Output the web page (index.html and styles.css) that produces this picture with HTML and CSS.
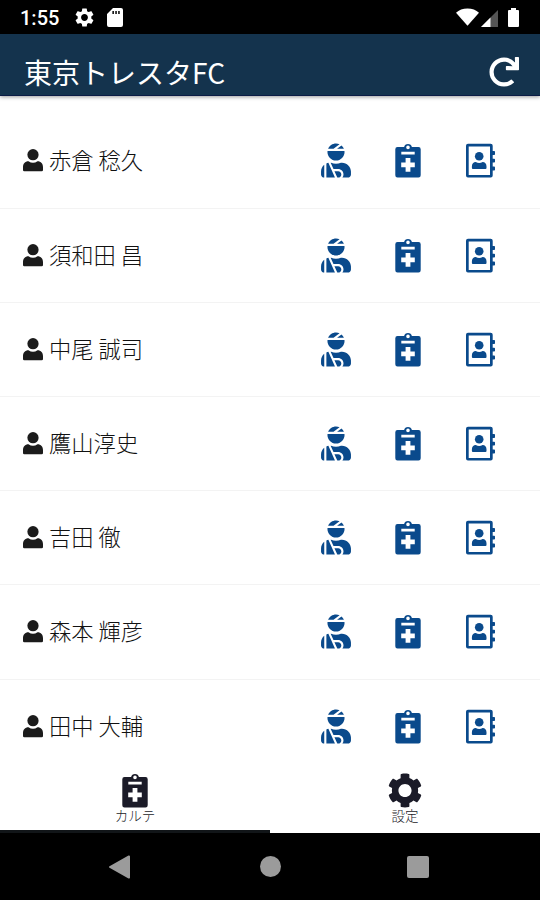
FILE: index.html
```
<!DOCTYPE html>
<html lang="ja">
<head>
    <meta charset="UTF-8">
    <meta name="viewport" content="width=device-width, initial-scale=1.0">
    <title>東京トレスタFC</title>
    <link rel="stylesheet" href="styles.css">
</head>
<body>

    <!-- icons used more than once -->
    <svg class="icon-defs" width="0" height="0">
        <symbol id="icon-user" viewBox="0 0 20 23">
            <circle cx="10" cy="5.700" r="5.600"/>
            <path d="M5.500 12.200c1.400 1 2.900 1.500 4.500 1.500s3.100-.5 4.500-1.500c3.500 0 5.500 2.500 5.500 6V21a1.300 1.300 0 0 1-1.300 1.300H1.300A1.300 1.300 0 0 1 0 21v-2.800c0-3.500 2-6 5.500-6z"/>
        </symbol>
        <symbol id="icon-injured" viewBox="-6 -6 460 524">
            <path d="M277.37 11.98C261.08 4.47 243.11 0 224 0c-53.69 0-99.5 33.13-118.51 80h81.19l90.69-68.02zM342.51 80c-7.9-19.47-20.67-36.2-36.49-49.52L239.99 80h102.52zM224 256c70.69 0 128-57.31 128-128 0-5.48-.95-10.7-1.61-16H97.61c-.67 5.3-1.61 10.52-1.61 16 0 70.69 57.31 128 128 128zM80 299.7V512h128.26l-98.45-221.52A132.835 132.835 0 0 0 80 299.7zM0 464c0 26.51 21.49 48 48 48V320.24C18.88 344.89 0 381.26 0 422.4V464zm256-48h-55.38l42.67 96H256c26.47 0 48-21.53 48-48s-21.53-48-48-48zm57.6-128h-16.71c-22.24 10.18-46.88 16-72.89 16s-50.65-5.82-72.89-16h-7.37l42.67 96H256c44.11 0 80 35.89 80 80 0 18.08-6.26 34.59-16.41 48H400c26.51 0 48-21.49 48-48v-41.6c0-74.23-60.17-134.4-134.4-134.4z"/>
        </symbol>
        <symbol id="icon-notes" viewBox="0 0 36 35">
            <path fill-rule="evenodd" d="M7.500 4.100h6.600a4 4 0 0 1 7.800 0h6.600a2.200 2.200 0 0 1 2.200 2.200v25.900a2.200 2.200 0 0 1-2.200 2.200h-21a2.200 2.200 0 0 1-2.200-2.200V6.300a2.200 2.200 0 0 1 2.200-2.200zM18 2.600a1.800 1.800 0 1 0 0 3.600A1.800 1.800 0 1 0 18 2.600zM11.300 8.700v2.800h13.400V8.700zM15.600 15.100v4.400h-4.400v4.800h4.400v4.400h4.800v-4.400h4.400v-4.800h-4.400v-4.400z"/>
        </symbol>
        <symbol id="icon-book" viewBox="0 0 36 35">
            <path fill-rule="evenodd" d="M6 .8h22.700a2 2 0 0 1 2 2V8h1.500a.8.8 0 0 1 .8.8v2.400a.8.8 0 0 1-.8.8h-1.500v3.700h1.500a.8.8 0 0 1 .8.8v2.200a.8.8 0 0 1-.8.8h-1.500v4.100h1.500a.8.8 0 0 1 .8.8v2.400a.8.8 0 0 1-.8.8h-1.500v5a2 2 0 0 1-2 2H6a2 2 0 0 1-2-2V2.800a2 2 0 0 1 2-2zM6.700 3.500V32h21.300V3.500z"/>
            <circle cx="17.200" cy="13.300" r="4.300"/>
            <path d="M13.800 19.100c2 1.200 4.800 1.200 6.800 0 2.400 0 3.900 1.800 3.900 4.200V25a1 1 0 0 1-1 1H10.900a1 1 0 0 1-1-1v-1.700c0-2.400 1.500-4.200 3.900-4.200z"/>
        </symbol>
    </svg>

    <div class="status-bar">
        <span class="clock">1:55</span>
        <svg class="status-gear" viewBox="2 2 20 20"><path d="M19.14 12.94c.04-.3.06-.61.06-.94 0-.32-.02-.64-.07-.94l2.03-1.58a.49.49 0 0 0 .12-.61l-1.92-3.32a.488.488 0 0 0-.59-.22l-2.39.96c-.5-.38-1.03-.7-1.62-.94l-.36-2.54a.484.484 0 0 0-.48-.41h-3.84c-.24 0-.43.17-.47.41l-.36 2.54c-.59.24-1.13.57-1.62.94l-2.39-.96c-.22-.08-.47 0-.59.22L2.74 8.87c-.12.21-.08.47.12.61l2.03 1.58c-.05.3-.09.63-.09.94s.02.64.07.94l-2.03 1.58a.49.49 0 0 0-.12.61l1.92 3.32c.12.22.37.29.59.22l2.39-.96c.5.38 1.03.7 1.62.94l.36 2.54c.05.24.24.41.48.41h3.84c.24 0 .44-.17.47-.41l.36-2.54c.59-.24 1.13-.56 1.62-.94l2.39.96c.22.08.47 0 .59-.22l1.92-3.32c.12-.22.07-.47-.12-.61l-2.01-1.58zM12 15.6c-1.98 0-3.6-1.62-3.6-3.6s1.62-3.6 3.6-3.6 3.6 1.62 3.6 3.6-1.62 3.6-3.6 3.6z"/></svg>
        <svg class="status-card" viewBox="0 0 16 19"><path fill-rule="evenodd" d="M6 0h8a2 2 0 0 1 2 2v15a2 2 0 0 1-2 2H2a2 2 0 0 1-2-2V6zM5.400 3v3h1.500V3zM8.300 3v3h1.500V3zM11.200 3v3h1.500V3z"/></svg>
        <svg class="status-wifi" viewBox="0 0 24 18"><path d="M12 18L0 4.500C3 1.600 7.200 0 12 0s9 1.600 12 4.500z"/></svg>
        <svg class="status-signal" viewBox="0 0 17 17"><path class="signal-weak" d="M17 0v17H0z"/><path d="M9.500 7.500V17H0z"/></svg>
        <svg class="status-battery" viewBox="0 0 11 19"><path d="M3 0h5v2h2a1 1 0 0 1 1 1v15a1 1 0 0 1-1 1H1a1 1 0 0 1-1-1V3a1 1 0 0 1 1-1h2z"/></svg>
    </div>

    <header class="header">
        <h1 class="title">東京トレスタFC</h1>
        <svg class="reload" viewBox="0 0 512 512"><path d="M500.33 0h-47.41a12 12 0 0 0-12 12.57l4 82.76A247.42 247.42 0 0 0 256 8C119.34 8 7.9 119.53 8 256.19 8.1 393.07 119.1 504 256 504a247.1 247.1 0 0 0 166.18-63.91 12 12 0 0 0 .48-17.43l-34-34a12 12 0 0 0-16.38-.55A176 176 0 1 1 402.1 157.8l-101.53-4.87a12 12 0 0 0-12.57 12v47.41a12 12 0 0 0 12 12h200.33a12 12 0 0 0 12-12V12a12 12 0 0 0-12-12z"/></svg>
    </header>

    <main class="player-list">
        <div class="player">
            <svg class="user"><use href="#icon-user"/></svg>
            <span class="name">赤倉 稔久</span>
            <svg class="action"><use href="#icon-injured"/></svg>
            <svg class="action"><use href="#icon-notes"/></svg>
            <svg class="action"><use href="#icon-book"/></svg>
        </div>
        <div class="player">
            <svg class="user"><use href="#icon-user"/></svg>
            <span class="name">須和田 昌</span>
            <svg class="action"><use href="#icon-injured"/></svg>
            <svg class="action"><use href="#icon-notes"/></svg>
            <svg class="action"><use href="#icon-book"/></svg>
        </div>
        <div class="player">
            <svg class="user"><use href="#icon-user"/></svg>
            <span class="name">中尾 誠司</span>
            <svg class="action"><use href="#icon-injured"/></svg>
            <svg class="action"><use href="#icon-notes"/></svg>
            <svg class="action"><use href="#icon-book"/></svg>
        </div>
        <div class="player">
            <svg class="user"><use href="#icon-user"/></svg>
            <span class="name">鷹山淳史</span>
            <svg class="action"><use href="#icon-injured"/></svg>
            <svg class="action"><use href="#icon-notes"/></svg>
            <svg class="action"><use href="#icon-book"/></svg>
        </div>
        <div class="player">
            <svg class="user"><use href="#icon-user"/></svg>
            <span class="name">吉田 徹</span>
            <svg class="action"><use href="#icon-injured"/></svg>
            <svg class="action"><use href="#icon-notes"/></svg>
            <svg class="action"><use href="#icon-book"/></svg>
        </div>
        <div class="player">
            <svg class="user"><use href="#icon-user"/></svg>
            <span class="name">森本 輝彦</span>
            <svg class="action"><use href="#icon-injured"/></svg>
            <svg class="action"><use href="#icon-notes"/></svg>
            <svg class="action"><use href="#icon-book"/></svg>
        </div>
        <div class="player">
            <svg class="user"><use href="#icon-user"/></svg>
            <span class="name">田中 大輔</span>
            <svg class="action"><use href="#icon-injured"/></svg>
            <svg class="action"><use href="#icon-notes"/></svg>
            <svg class="action"><use href="#icon-book"/></svg>
        </div>
    </main>

    <nav class="tabs">
        <div class="tab active">
            <svg class="tab-icon"><use href="#icon-notes"/></svg>
            <span>カルテ</span>
        </div>
        <div class="tab">
            <svg class="tab-icon" viewBox="0 0 512 512"><path d="M487.4 315.7l-42.6-24.6c4.3-23.2 4.3-47 0-70.2l42.6-24.6c4.9-2.8 7.1-8.6 5.5-14-11.1-35.6-30-67.8-54.7-94.6-3.8-4.1-10-5.1-14.8-2.3L380.8 110c-17.9-15.4-38.5-27.3-60.8-35.1V25.8c0-5.6-3.9-10.5-9.4-11.7-36.7-8.2-74.3-7.8-109.2 0-5.5 1.2-9.4 6.1-9.4 11.7V75c-22.2 7.9-42.8 19.8-60.8 35.1L88.7 85.5c-4.9-2.8-11-1.9-14.8 2.3-24.7 26.7-43.6 58.9-54.7 94.6-1.7 5.4.6 11.2 5.5 14L67.3 221c-4.3 23.2-4.3 47 0 70.2l-42.6 24.6c-4.9 2.8-7.1 8.6-5.5 14 11.1 35.6 30 67.8 54.7 94.6 3.8 4.1 10 5.1 14.8 2.3l42.6-24.6c17.9 15.4 38.5 27.3 60.8 35.1v49.2c0 5.6 3.9 10.5 9.4 11.7 36.7 8.2 74.3 7.8 109.2 0 5.5-1.2 9.4-6.1 9.4-11.7v-49.2c22.2-7.9 42.8-19.8 60.8-35.1l42.6 24.6c4.9 2.8 11 1.9 14.8-2.3 24.7-26.7 43.6-58.9 54.7-94.6 1.5-5.500-.7-11.300-5.600-14.100zM256 352c-53 0-96-43-96-96s43-96 96-96 96 43 96 96-43 96-96 96z"/></svg>
            <span>設定</span>
        </div>
    </nav>

    <div class="android-nav">
        <svg class="nav-back" viewBox="0 0 21 24"><path d="M20 .5a1 1 0 0 1 1 1v21a1 1 0 0 1-1.500.9L.5 12.800a1 1 0 0 1 0-1.600L19.500.6z"/></svg>
        <span class="nav-home"></span>
        <span class="nav-recent"></span>
    </div>

</body>
</html>
```
FILE: styles.css
```
* {
    box-sizing: border-box;
}

body {
    display: flex;
    flex-direction: column;
    height: 900px;
    margin: 0;
    overflow: hidden;
    background-color: #fff;
    font-family: "Noto Sans CJK JP", sans-serif;
}

svg {
    display: block;
    flex: none;
    fill: currentColor;
}

.icon-defs {
    position: absolute;
}

.status-bar {
    display: flex;
    align-items: center;
    flex: none;
    height: 34px;
    padding: 0 21px 0 20px;
    background-color: #000;
    color: #fff;
}

.clock {
    width: 55px;
    padding-top: 2px;
    font-family: Roboto, sans-serif;
    font-size: 20px;
    font-weight: 500;
    line-height: 24px;
}

.status-gear {
    width: 19px;
    height: 19px;
}

.status-card {
    width: 16px;
    height: 19px;
    margin-left: 13px;
}

.status-wifi {
    width: 23px;
    height: 18px;
    margin-left: auto;
}

.status-signal {
    width: 17px;
    height: 17px;
    margin: 2px 10px 0 2px;
}

.signal-weak {
    fill: #555;
}

.status-battery {
    width: 11px;
    height: 19px;
}

.header {
    display: flex;
    align-items: center;
    justify-content: space-between;
    flex: none;
    height: 62px;
    padding: 15px 21px 0 24px;
    background-color: #14334d;
    border-bottom: 1px solid #0b1c45;
    box-shadow: 0 1px 4px rgba(0,0,0,0.4);
    color: #fff;
}

.title {
    margin: 0;
    font-size: 28px;
    font-weight: 400;
    line-height: 40px;
}

.reload {
    width: 30px;
    height: 30px;
}

.player-list {
    flex: none;
    height: 664px;
    padding-top: 18.4px;
    overflow: hidden;
}

.player {
    display: flex;
    align-items: center;
    height: 94.2px;
    padding: 0 42px 0 23px;
    border-bottom: 1px solid #f3f3f3;
    color: #0a4a8c;
}

.user {
    width: 20px;
    height: 23px;
    color: #1b1b1b;
}

.name {
    flex: 1;
    margin-left: 6px;
    padding-bottom: 3px;
    color: #111;
    font-size: 22.3px;
    font-weight: 300;
    line-height: 32px;
}

.action {
    width: 36px;
    height: 35px;
    margin-left: 36px;
}

.tabs {
    display: flex;
    flex: none;
    height: 73px;
    background-color: #fff;
}

.tab {
    display: flex;
    flex: 1;
    flex-direction: column;
    align-items: center;
    padding-top: 13px;
    border-bottom: 3px solid transparent;
    color: #1b1b28;
    font-size: 13.5px;
    font-weight: 300;
    line-height: 15px;
}

.active {
    border-bottom-color: #111518;
}

.tab-icon {
    width: 36px;
    height: 35px;
}

.android-nav {
    display: flex;
    align-items: center;
    flex: none;
    height: 67px;
    padding-left: 109px;
    background-color: #000;
    color: #9b9b9b;
}

.nav-back {
    width: 21px;
    height: 24px;
}

.nav-home {
    width: 21px;
    height: 21px;
    margin: 0 126px 0 130px;
    border-radius: 50%;
    background-color: #9b9b9b;
}

.nav-recent {
    width: 22px;
    height: 22px;
    border-radius: 2px;
    background-color: #9b9b9b;
}
```
